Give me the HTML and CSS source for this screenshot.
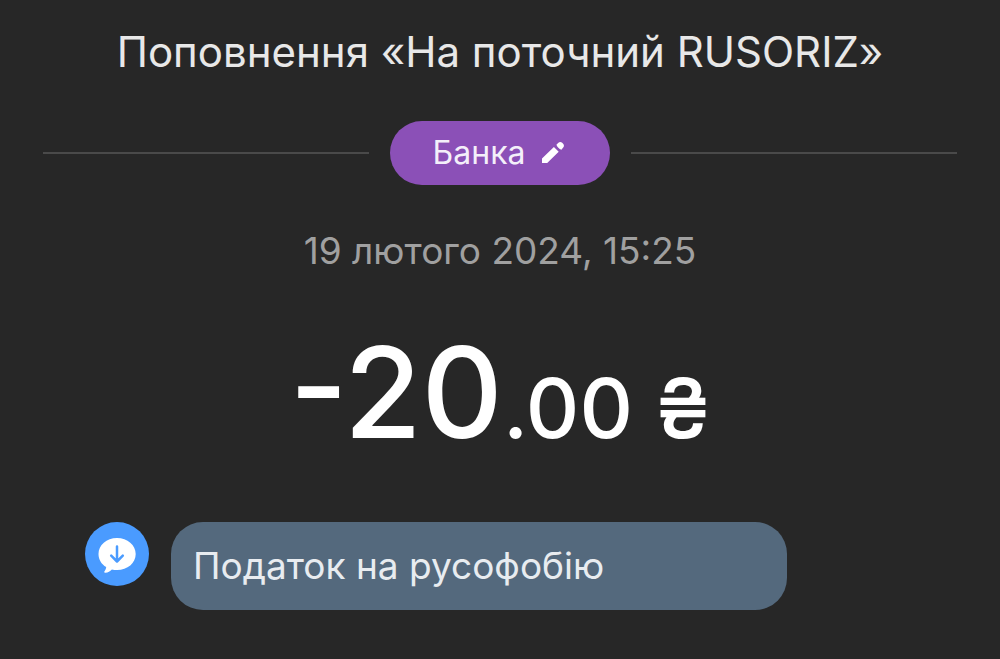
FILE: index.html
```html
<!DOCTYPE html>
<html lang="uk">
<head>
<meta charset="utf-8">
<meta name="viewport" content="width=device-width, initial-scale=1">
<title>Поповнення</title>
<link rel="stylesheet" href="styles.css">
</head>
<body>
<main class="details">
  <h1 class="title">Поповнення «На поточний RUSORIZ»</h1>
  <div class="category-row">
    <button class="category" type="button">
      <span>Банка</span>
      <svg class="pencil" viewBox="0 0 24 24" aria-hidden="true"><path d="M1 17.500V22h5.200L17.700 10.800l-4.800-4.800zM22.400 6.300c.8-1.200.7-2.600-.3-3.600l-.9-.9c-1.200-1-2.700-1-3.800 0l-2 2c1 2.400 2.600 4 5 5z"/></svg>
    </button>
  </div>
  <time class="date" datetime="2024-02-19T15:25">19 лютого 2024, 15:25</time>
  <p class="amount">-20<span class="fraction">.00 ₴</span></p>
  <div class="comment">
    <svg class="avatar" viewBox="0 0 64 64" aria-hidden="true">
      <circle cx="32" cy="32" r="32" fill="#4a9bff"/>
      <path d="M32 16c10.500 0 18.700 7 18.700 16S42.500 48 32 48c-1.800 0-3.500-.2-5.100-.6-1.900 1.900-3.800 3.100-6.400 3.400-1 .1-1.600-.8-1-1.600 1-1.200 1.500-2.300 1.700-4.100C16.400 42.200 13.500 37.500 13.500 32c0-9 8-16 18.500-16z" fill="#fff"/>
      <path d="M32 24.500v14.500m-5.800-5.300L32 39.500l5.800-5.800" fill="none" stroke="#4a9bff" stroke-width="2.500" stroke-linecap="round" stroke-linejoin="round"/>
    </svg>
    <p class="bubble">Податок на русофобію</p>
  </div>
</main>
</body>
</html>
```
FILE: styles.css
```css
* { box-sizing: border-box; }
body {
  margin: 0;
  min-height: 100vh;
  background: #272727;
  color: #fff;
  font-family: Inter, sans-serif;
}
.details {
  display: flex;
  flex-direction: column;
  padding: 28px 43px 49px;
}
.title {
  margin: 0 0 45px;
  color: #e8e8e8;
  font-size: 42px;
  font-weight: 400;
  line-height: 48px;
  text-align: center;
}
.category-row {
  display: flex;
  align-items: center;
  gap: 21px;
}
.category-row::before,
.category-row::after {
  content: "";
  flex: 1;
  height: 2px;
  background: #4a4a4a;
}
.category {
  display: flex;
  align-items: center;
  justify-content: center;
  gap: 16px;
  height: 64px;
  padding: 0 45px 0 43px;
  border: 0;
  border-radius: 32px;
  background: #8b50b7;
  color: #f4effa;
  font: 400 32px/40px Inter, sans-serif;
}
.pencil {
  width: 24px;
  height: 24px;
  fill: #fff;
}
.date {
  margin-top: 44px;
  color: #a0a0a0;
  font-size: 37px;
  line-height: 44px;
  text-align: center;
}
.amount {
  margin: 41px 0 52px;
  font-size: 126px;
  font-weight: 500;
  line-height: 156px;
  text-align: center;
}
.fraction {
  font-size: 83px;
  line-height: 1;
}
.comment {
  display: flex;
  gap: 22px;
  margin: 0 170px 0 42px;
}
.avatar {
  flex: none;
  width: 64px;
  height: 64px;
}
.bubble {
  flex: 1;
  margin: 0;
  padding: 22px;
  border-radius: 32px;
  background: #54697d;
  color: #e8ecf0;
  font-size: 37px;
  line-height: 44px;
}
```
